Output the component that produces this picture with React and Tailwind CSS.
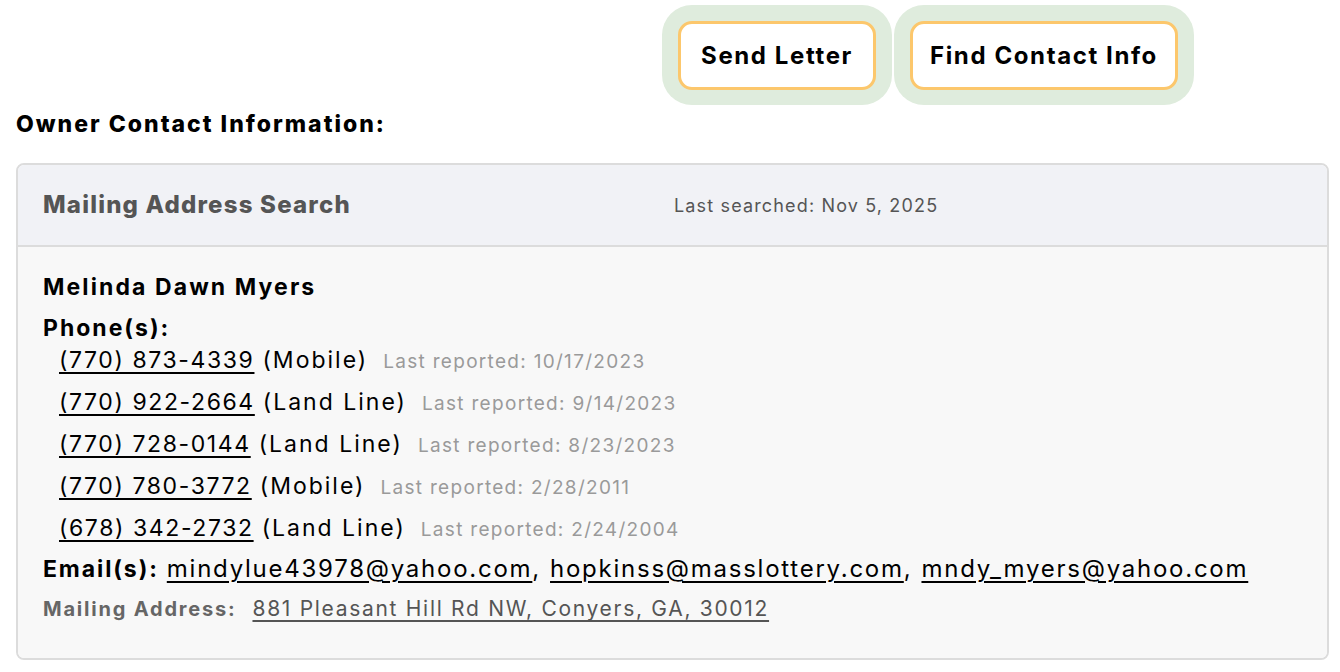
const phones = [
  { num: '(770) 873-4339', type: 'Mobile', date: '10/17/2023' },
  { num: '(770) 922-2664', type: 'Land Line', date: '9/14/2023' },
  { num: '(770) 728-0144', type: 'Land Line', date: '8/23/2023' },
  { num: '(770) 780-3772', type: 'Mobile', date: '2/28/2011' },
  { num: '(678) 342-2732', type: 'Land Line', date: '2/24/2004' },
];

const emails = ['mindylue43978@yahoo.com', 'hopkinss@masslottery.com', 'mndy_myers@yahoo.com'];

const ActionButton = ({ label, width }) => (
  <div className="bg-[#dfecdd] rounded-[30px] px-4 pt-4 pb-[15px]">
    <button className={`${width} h-[69px] bg-white border-[3px] border-[#fcc76c] rounded-[14px] text-[24px] font-bold tracking-[1.6px] text-black`}>
      {label}
    </button>
  </div>
);

const App = () => {
  return (
    <main className="min-h-screen bg-white font-['Inter',sans-serif] text-black pl-4 pr-[11px]">
      <div className="flex gap-[2px] pt-[5px] pl-[646px]">
        <ActionButton label="Send Letter" width="w-[198px]" />
        <ActionButton label="Find Contact Info" width="w-[268px]" />
      </div>

      <h2 className="mt-[5px] text-[23px] font-extrabold tracking-[2px] leading-[28px]">Owner Contact Information:</h2>

      <section className="mt-[25px] border-2 border-[#dcdcdc] rounded-[8px] overflow-hidden">
        <div className="h-[82px] bg-[#f1f2f6] border-b-2 border-[#dcdcdc] flex items-center px-[25px]">
          <h3 className="w-[631px] text-[24px] font-extrabold tracking-[1.2px] text-[#555555]">Mailing Address Search</h3>
          <span className="text-[18px] tracking-[1.15px] text-[#555555]">Last searched: Nov 5, 2025</span>
        </div>

        <div className="bg-[#f8f8f8] px-[25px] pt-[25px] pb-[29px]">
          <div className="text-[23px] font-bold tracking-[2.1px] leading-[30px]">Melinda Dawn Myers</div>
          <div className="mt-[11px] text-[23px] font-bold tracking-[2px] leading-[30px]">Phone(s):</div>
          <ul className="pl-4 -mt-[4px]">
            {phones.map((p) => (
              <li key={p.num} className="flex items-baseline h-[42px] leading-[42px]">
                <a href="#" className="text-[23px] tracking-[1.6px] underline decoration-[2px] underline-offset-[4px]">{p.num}</a>
                <span className="text-[23px] tracking-[2px] ml-[8px]">({p.type})</span>
                <span className="text-[19px] tracking-[1.3px] text-[#9a9a9a] ml-[15px]">Last reported: {p.date}</span>
              </li>
            ))}
          </ul>
          <div className="flex items-baseline leading-[40px]">
            <span className="text-[23px] font-bold tracking-[1.9px] mr-[8px]">Email(s):</span>
            {emails.map((e, i) => (
              <span key={e} className="text-[24px] tracking-[1.75px]">
                <a href="#" className="underline decoration-[2px] underline-offset-[4px]">{e}</a>
                {i < emails.length - 1 && <span className="mr-[9px]">,</span>}
              </span>
            ))}
          </div>
          <div className="flex items-baseline leading-[40px]">
            <span className="text-[20px] font-bold tracking-[1.8px] text-[#666666] mr-[16px]">Mailing Address:</span>
            <a href="#" className="text-[21px] tracking-[1.7px] text-[#555555] underline decoration-[1.5px] underline-offset-[4px]">
              881 Pleasant Hill Rd NW, Conyers, GA, 30012
            </a>
          </div>
        </div>
      </section>
    </main>
  );
};

export default App;
